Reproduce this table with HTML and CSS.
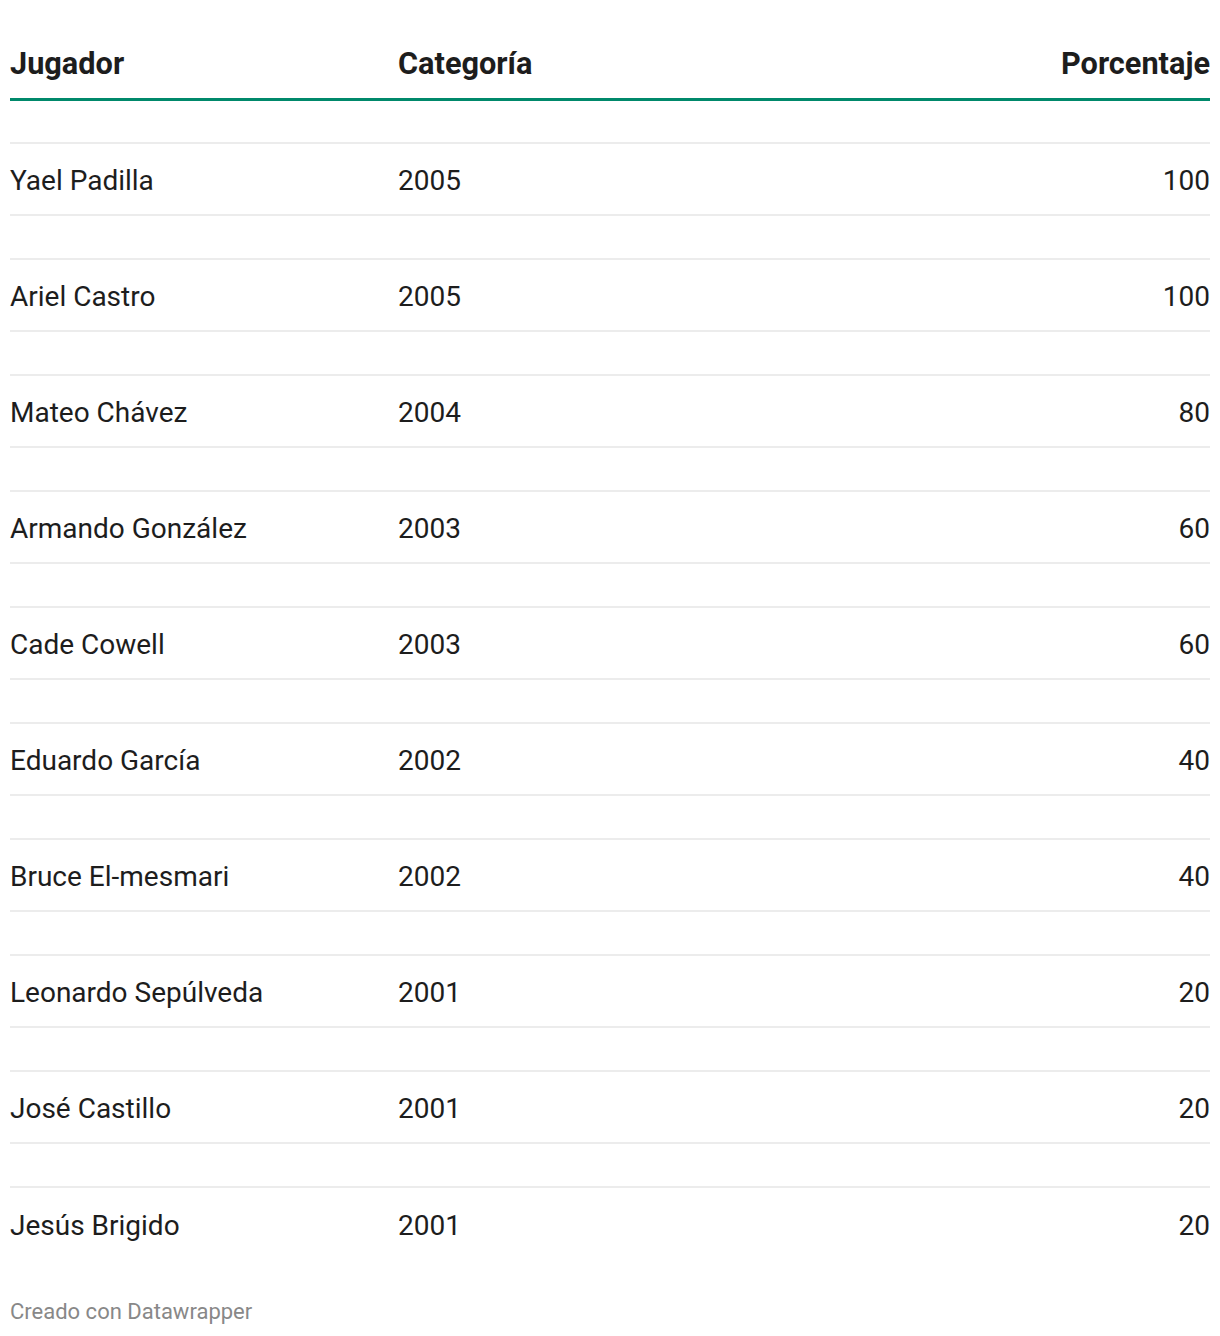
FILE: index.html
```html
<!DOCTYPE html>
<html lang="es">
<head>
<meta charset="utf-8">
<title>Tabla</title>
<link rel="stylesheet" href="styles.css">
</head>
<body>
<div class="wrap">
  <div class="head">
    <div class="c1">Jugador</div>
    <div class="c2">Categoría</div>
    <div class="c3">Porcentaje</div>
  </div>
  <div class="rows">
    <div class="row"><div class="c1">Yael Padilla</div><div class="c2">2005</div><div class="c3">100</div></div>
    <div class="row"><div class="c1">Ariel Castro</div><div class="c2">2005</div><div class="c3">100</div></div>
    <div class="row"><div class="c1">Mateo Chávez</div><div class="c2">2004</div><div class="c3">80</div></div>
    <div class="row"><div class="c1">Armando González</div><div class="c2">2003</div><div class="c3">60</div></div>
    <div class="row"><div class="c1">Cade Cowell</div><div class="c2">2003</div><div class="c3">60</div></div>
    <div class="row"><div class="c1">Eduardo García</div><div class="c2">2002</div><div class="c3">40</div></div>
    <div class="row"><div class="c1">Bruce El-mesmari</div><div class="c2">2002</div><div class="c3">40</div></div>
    <div class="row"><div class="c1">Leonardo Sepúlveda</div><div class="c2">2001</div><div class="c3">20</div></div>
    <div class="row"><div class="c1">José Castillo</div><div class="c2">2001</div><div class="c3">20</div></div>
    <div class="row last"><div class="c1">Jesús Brigido</div><div class="c2">2001</div><div class="c3">20</div></div>
  </div>
  <div class="foot">Creado con Datawrapper</div>
</div>
</body>
</html>
```

FILE: styles.css
```css
html, body {
  margin: 0;
  padding: 0;
  background: #ffffff;
}
body {
  font-family: Roboto, "Liberation Sans", sans-serif;
  color: #1d1d1d;
}
.wrap {
  padding: 0 10px;
}
.head {
  display: grid;
  grid-template-columns: 388px 1fr auto;
  align-items: end;
  border-bottom: 3px solid #00896b;
  box-sizing: border-box;
  height: 101px;
  padding-bottom: 16px;
  font-weight: 700;
  font-size: 30.7px;
  line-height: 36px;
}
.rows {
  padding-top: 41px;
  display: flex;
  flex-direction: column;
  gap: 42px;
}
.row {
  display: grid;
  grid-template-columns: 388px 1fr auto;
  align-items: center;
  height: 74px;
  box-sizing: border-box;
  padding-top: 4px;
  border-top: 2px solid #ececec;
  border-bottom: 2px solid #ececec;
  font-size: 28px;
  line-height: 34px;
}
.row.last {
  border-bottom: 0;
}
.c3 {
  text-align: right;
}
.foot {
  margin-top: 39px;
  font-size: 22px;
  line-height: 26px;
  color: #888888;
}
```
